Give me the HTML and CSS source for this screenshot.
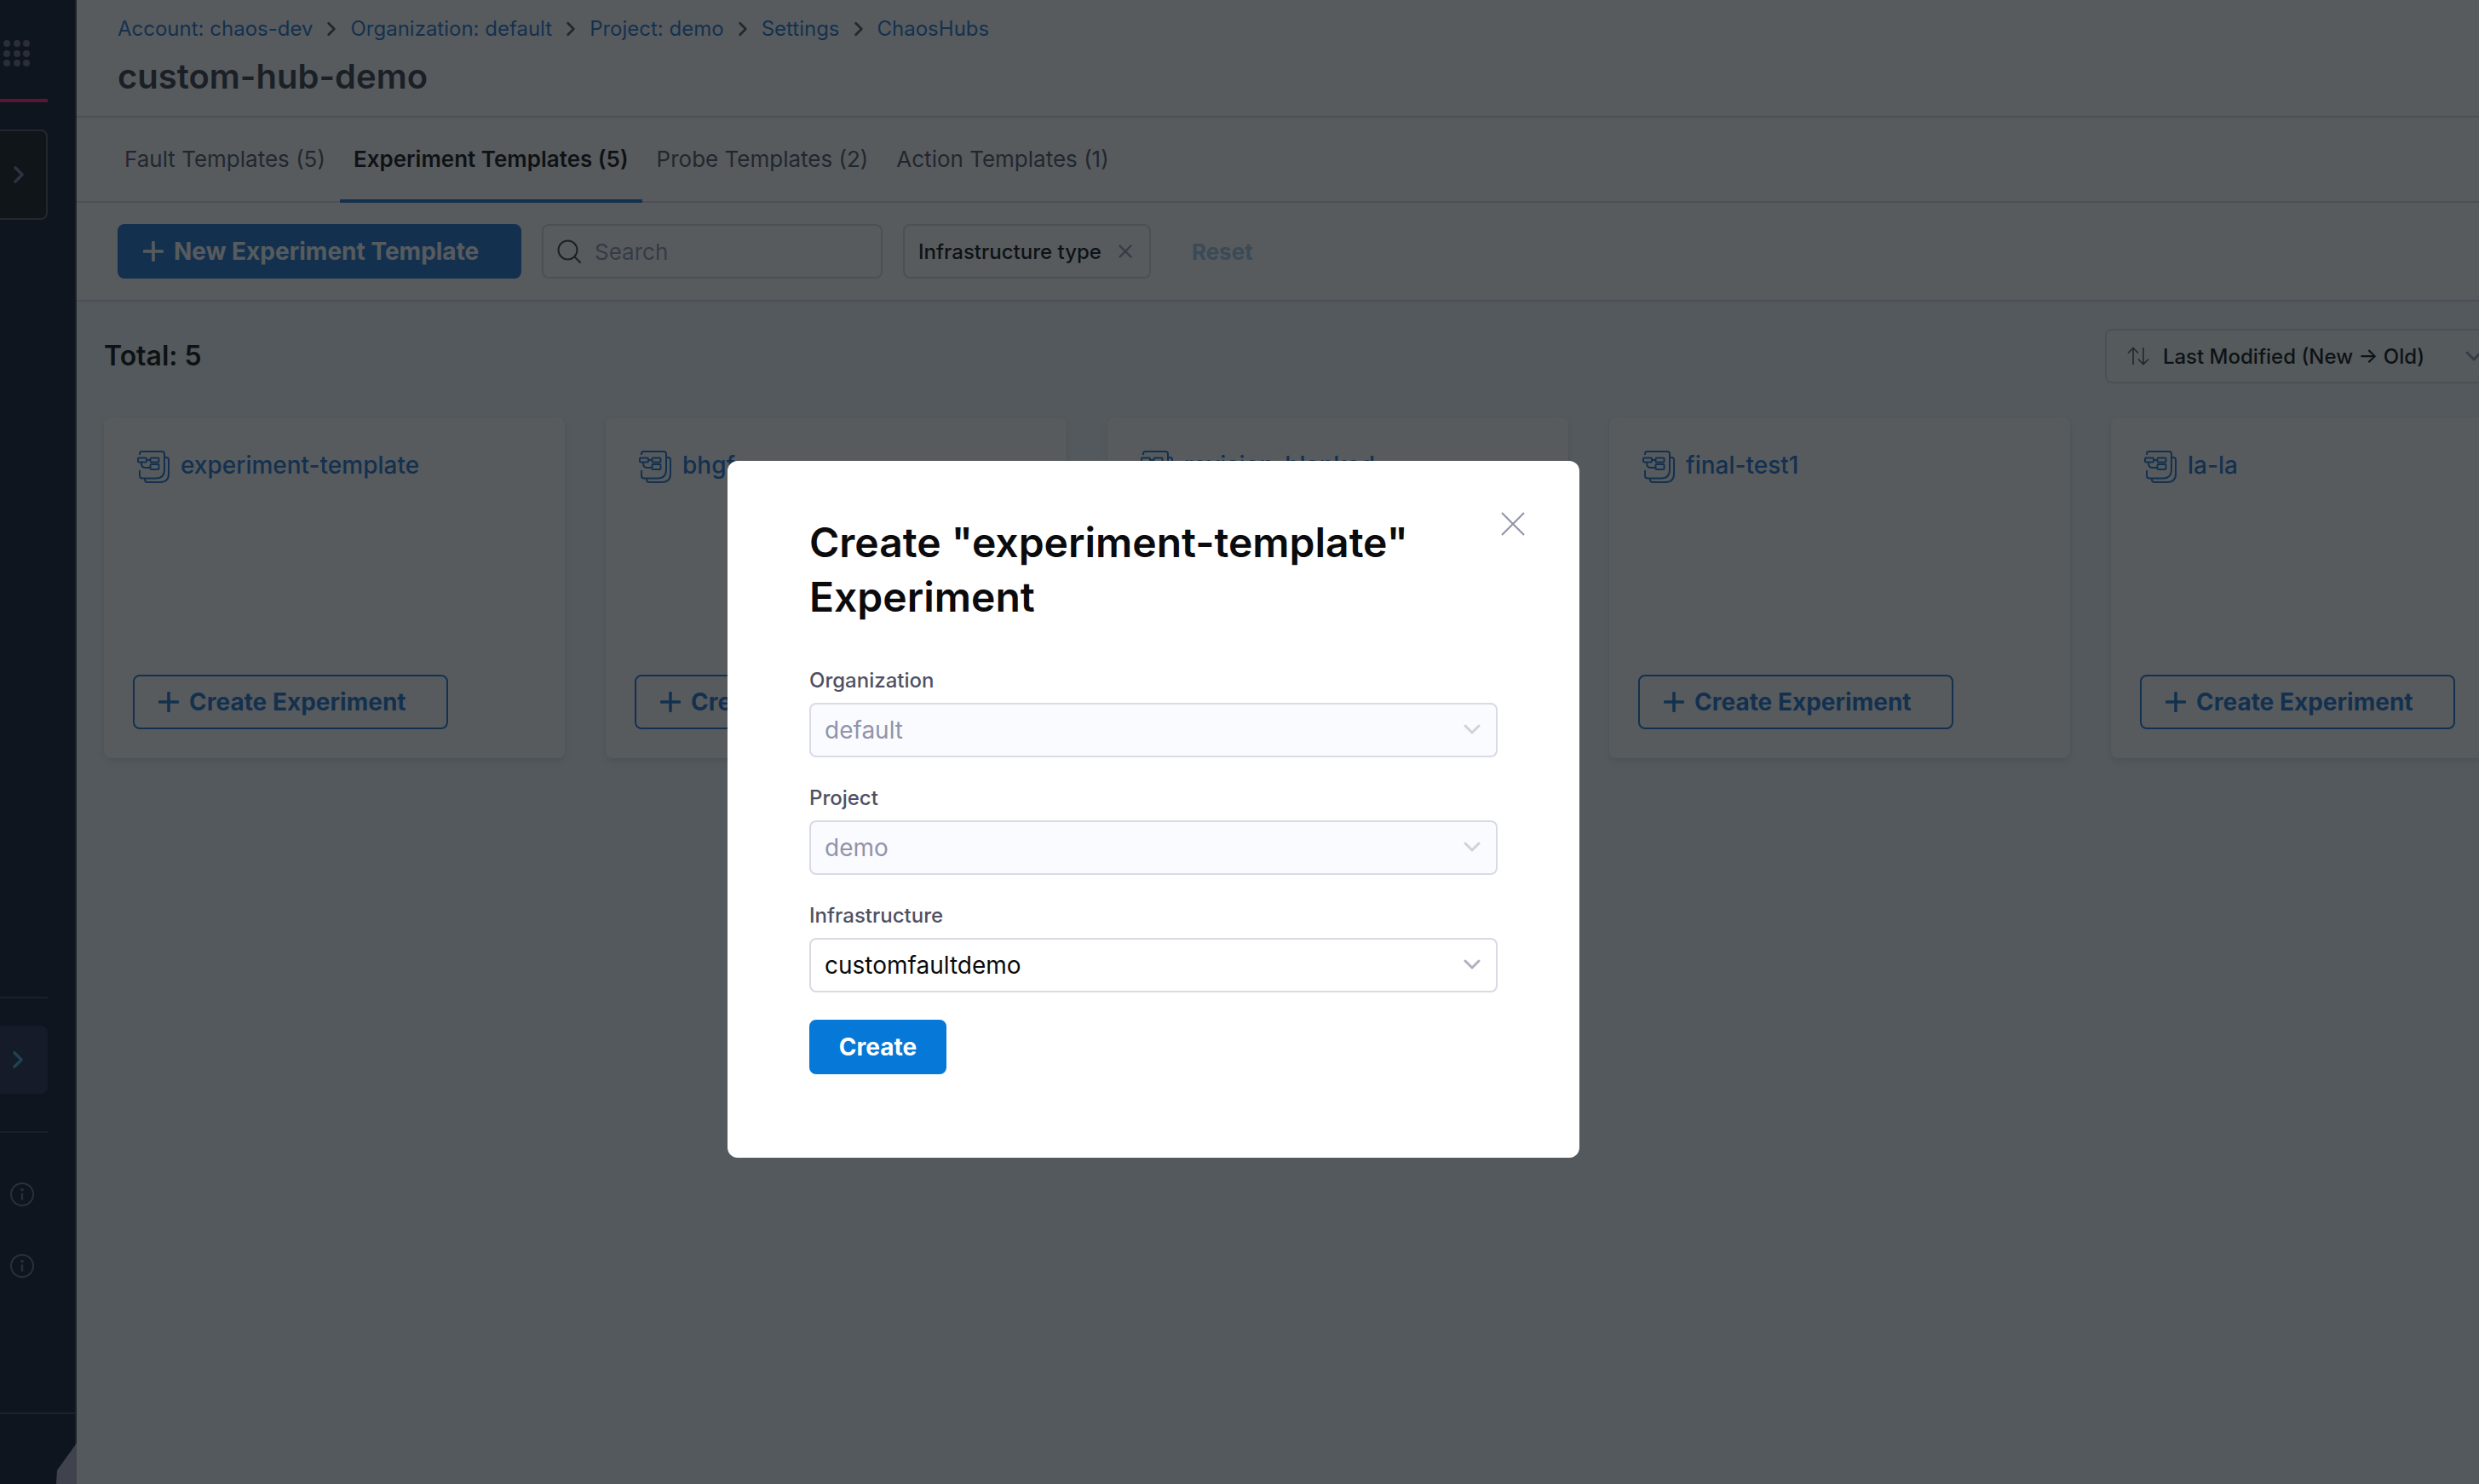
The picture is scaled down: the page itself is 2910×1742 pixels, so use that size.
FILE: index.html
```html
<!DOCTYPE html>
<html lang="en">
<head>
<meta charset="utf-8">
<title>custom-hub-demo</title>
<link rel="stylesheet" href="styles.css">
</head>
<body>
<svg class="sprite" aria-hidden="true">
  <symbol id="chevron-right" viewBox="0 0 10 16"><path d="M2 2l6 6-6 6" fill="none" stroke="currentColor" stroke-width="2.4" stroke-linecap="round" stroke-linejoin="round"/></symbol>
  <symbol id="chevron-down" viewBox="0 0 20 12"><path d="M2 2l8 8 8-8" fill="none" stroke="currentColor" stroke-width="3" stroke-linecap="round" stroke-linejoin="round"/></symbol>
  <symbol id="plus" viewBox="0 0 24 24"><path d="M12 1.5v21M1.5 12h21" fill="none" stroke="currentColor" stroke-width="3.6" stroke-linecap="round"/></symbol>
  <symbol id="info" viewBox="0 0 28 28"><circle cx="14" cy="14" r="13" fill="none" stroke="currentColor" stroke-width="2"/><circle cx="14" cy="8.6" r="1.8" fill="currentColor"/><path d="M14 13.6v6" stroke="currentColor" stroke-width="2.4" stroke-linecap="round"/></symbol>
  <symbol id="template" viewBox="0 0 40 40"><g fill="none" stroke="currentColor" stroke-width="2" stroke-linejoin="round"><path d="M4 6V4.500Q4 2 6.500 2H30Q33 2 33 5V23Q33 33.500 23 33.500H7Q4 33.500 4 30.500V24"/><path d="M33 9h2.500Q38 9 38 12V28Q38 38 28 38H13Q10 38 10 35V33.500"/><rect x="2" y="9.500" width="10" height="5" rx="1"/><rect x="16.500" y="9.500" width="10" height="5" rx="1"/><rect x="16.500" y="17" width="10" height="6" rx="1"/><path d="M12 12h4.500M6 14.500V16q0 5 5 5h5.500"/></g></symbol>
</svg>

<div class="app">
  <aside class="sidebar">
    <svg class="apps" viewBox="0 0 36 36" aria-hidden="true"><g fill="currentColor"><circle cx="8" cy="7" r="4"/><circle cx="20" cy="7" r="4"/><circle cx="31" cy="7" r="4"/><circle cx="8" cy="19" r="4"/><circle cx="20" cy="19" r="4"/><circle cx="31" cy="19" r="4"/><circle cx="8" cy="30" r="4"/><circle cx="20" cy="30" r="4"/><circle cx="31" cy="30" r="4"/></g></svg>
    <div class="accent"></div>
    <button class="scope" aria-label="Change scope"><svg class="scope-icon"><use href="#chevron-right"/></svg></button>
    <div class="sidebar-bottom">
      <hr class="rule">
      <button class="settings" aria-label="Open settings"><svg class="settings-icon"><use href="#chevron-right"/></svg></button>
      <hr class="rule">
      <svg class="info"><use href="#info"/></svg>
      <svg class="info"><use href="#info"/></svg>
      <div class="sidebar-foot"><svg class="collapse" viewBox="0 0 24 48" aria-hidden="true"><path d="M24 0L1 32L0 48H24Z" fill="currentColor"/></svg></div>
    </div>
  </aside>

  <main class="main">
    <header class="header">
      <nav class="crumbs" aria-label="Breadcrumb">
        <a href="#">Account: chaos-dev</a><svg class="crumb-sep"><use href="#chevron-right"/></svg>
        <a href="#">Organization: default</a><svg class="crumb-sep"><use href="#chevron-right"/></svg>
        <a href="#">Project: demo</a><svg class="crumb-sep"><use href="#chevron-right"/></svg>
        <a href="#">Settings</a><svg class="crumb-sep"><use href="#chevron-right"/></svg>
        <a href="#">ChaosHubs</a>
      </nav>
      <h1 class="title">custom-hub-demo</h1>
    </header>
    <nav class="tabs" aria-label="Templates">
      <a class="tab" href="#">Fault Templates (5)</a>
      <a class="tab tab-active" href="#">Experiment Templates (5)</a>
      <a class="tab" href="#">Probe Templates (2)</a>
      <a class="tab" href="#">Action Templates (1)</a>
    </nav>
    <div class="toolbar">
      <button class="btn btn-primary btn-new"><svg class="plus"><use href="#plus"/></svg>New Experiment Template</button>
      <label class="search">
        <svg class="search-icon" viewBox="0 0 28 28" aria-hidden="true"><circle cx="12.500" cy="12.500" r="11" fill="none" stroke="currentColor" stroke-width="2"/><path d="M20.500 20.500L27 27" stroke="currentColor" stroke-width="2" stroke-linecap="round"/></svg>
        <input class="search-input" type="text" placeholder="Search" aria-label="Search">
      </label>
      <button class="filter">Infrastructure type<svg class="filter-x" viewBox="0 0 16 16" aria-hidden="true"><path d="M1.500 1.500l13 13M14.500 1.500l-13 13" stroke="currentColor" stroke-width="2.400" stroke-linecap="round"/></svg></button>
      <button class="reset">Reset</button>
    </div>
    <section class="content">
      <div class="summary">
        <h2 class="total">Total: 5</h2>
        <button class="sort">
          <svg class="sort-icon" viewBox="0 0 26 22" aria-hidden="true"><path d="M7 21V1.500M1 7.500l6-6 6 6M19 1v19.500M13 14.500l6 6 6-6" fill="none" stroke="currentColor" stroke-width="1.600"/></svg>
          <span class="sort-label">Last Modified (New → Old)</span>
          <svg class="sort-chevron"><use href="#chevron-down"/></svg>
        </button>
      </div>
      <div class="cards">
        <article class="card"><a class="card-title" href="#"><svg class="template"><use href="#template"/></svg>experiment-template</a><button class="btn btn-outline"><svg class="plus"><use href="#plus"/></svg>Create Experiment</button></article>
        <article class="card"><a class="card-title" href="#"><svg class="template"><use href="#template"/></svg>bhgf</a><button class="btn btn-outline"><svg class="plus"><use href="#plus"/></svg>Create Experiment</button></article>
        <article class="card"><a class="card-title" href="#"><svg class="template"><use href="#template"/></svg>revision-blanked</a><button class="btn btn-outline"><svg class="plus"><use href="#plus"/></svg>Create Experiment</button></article>
        <article class="card"><a class="card-title" href="#"><svg class="template"><use href="#template"/></svg>final-test1</a><button class="btn btn-outline"><svg class="plus"><use href="#plus"/></svg>Create Experiment</button></article>
        <article class="card"><a class="card-title" href="#"><svg class="template"><use href="#template"/></svg>la-la</a><button class="btn btn-outline"><svg class="plus"><use href="#plus"/></svg>Create Experiment</button></article>
      </div>
    </section>
  </main>
</div>

<div class="backdrop">
  <div class="dialog" role="dialog" aria-modal="true" aria-labelledby="dialog-title">
    <button class="close" aria-label="Close"><svg class="close-icon" viewBox="0 0 28 28"><path d="M1 1l26 26M27 1L1 27" stroke="currentColor" stroke-width="2"/></svg></button>
    <h2 class="dialog-title" id="dialog-title">Create "experiment-template" Experiment</h2>
    <form class="form">
      <div class="field">
        <label class="label" for="org">Organization</label>
        <div class="select-wrap select-disabled"><select class="select" id="org" disabled><option>default</option></select><svg class="select-chevron"><use href="#chevron-down"/></svg></div>
      </div>
      <div class="field">
        <label class="label" for="project">Project</label>
        <div class="select-wrap select-disabled"><select class="select" id="project" disabled><option>demo</option></select><svg class="select-chevron"><use href="#chevron-down"/></svg></div>
      </div>
      <div class="field">
        <label class="label" for="infra">Infrastructure</label>
        <div class="select-wrap"><select class="select" id="infra"><option>customfaultdemo</option></select><svg class="select-chevron"><use href="#chevron-down"/></svg></div>
      </div>
      <button class="btn btn-primary btn-create" type="button">Create</button>
    </form>
  </div>
</div>
</body>
</html>
```

FILE: styles.css
```css
:root {
  --primary: #1d73cb;
  --primary-strong: #0578d8;
  --border: #d9dae5;
  --text: #0b0b0d;
  --text-muted: #4f5162;
  --grey: #9293ab;
}

* { box-sizing: border-box; }

body {
  margin: 0;
  font-family: Inter, "Liberation Sans", sans-serif;
  font-size: 24px;
  color: var(--text);
  background: #fff;
}

button, input, select { font: inherit; color: inherit; }
button { cursor: pointer; }
a { color: var(--primary); text-decoration: none; }
h1, h2 { margin: 0; font-weight: 600; }
.sprite { position: absolute; width: 0; height: 0; }

.app { display: flex; height: 100vh; overflow: hidden; }

/* Sidebar */
.sidebar {
  flex: none;
  display: flex;
  flex-direction: column;
  align-items: flex-start;
  width: 90px;
  background: #0a162e;
  border-right: 2px solid #3a4550;
  color: #6b6d85;
}
.apps { width: 36px; height: 36px; margin-top: 44px; color: #6b6680; }
.accent { width: 56px; height: 4px; margin: 36px 0 32px; background: #fa2468; }
.scope {
  display: flex;
  align-items: center;
  width: 56px;
  height: 106px;
  padding: 0 0 0 15px;
  border: 2px solid #55535e;
  border-left: 0;
  border-radius: 0 8px 8px 0;
  background: #12161d;
  color: #7b7798;
}
.scope-icon { width: 14px; height: 22px; }
.sidebar-bottom { display: flex; flex-direction: column; align-items: flex-start; width: 100%; margin-top: auto; }
.rule { width: 56px; height: 2px; margin: 0; border: 0; background: #3a3f4b; }
.settings {
  display: flex;
  align-items: center;
  width: 56px;
  height: 80px;
  margin: 32px 0 44px;
  padding: 0 0 0 14px;
  border: 0;
  border-radius: 0 8px 8px 0;
  background: #222a4a;
  color: #45b0da;
}
.settings-icon { width: 14px; height: 22px; }
.info { width: 28px; height: 28px; margin: 56px 0 0 12px; color: #6b6d80; }
.rule + .info { margin-top: 58px; }
.sidebar-foot {
  display: flex;
  justify-content: flex-end;
  align-items: flex-end;
  width: 100%;
  height: 84px;
  margin-top: 158px;
  border-top: 2px solid #3a4550;
}
.collapse { width: 24px; height: 48px; margin-right: -2px; color: #b3b0c7; }

/* Page header */
.main {
  flex: 1;
  min-width: 0;
  display: flex;
  flex-direction: column;
  background: #fff;
}
.header {
  display: flex;
  flex-direction: column;
  gap: 16px;
  padding: 18px 48px 22px;
  border-bottom: 2px solid var(--border);
}
.crumbs { display: flex; align-items: center; gap: 16px; line-height: 32px; }
.crumb-sep { width: 12px; height: 18px; color: var(--text-muted); }
.title { font-size: 40px; line-height: 48px; color: #383946; }

.tabs { display: flex; gap: 1px; height: 100px; padding: 0 40px; border-bottom: 2px solid var(--border); }
.tab {
  display: flex;
  align-items: center;
  height: 100px;
  padding: 0 16px;
  border-bottom: 4px solid transparent;
  font-size: 26px;
  color: var(--text-muted);
}
.tab-active {
  border-color: var(--primary);
  border-radius: 4px 4px 0 0;
  font-weight: 600;
  color: var(--text);
}

/* Toolbar */
.toolbar {
  display: flex;
  align-items: center;
  gap: 24px;
  padding: 25px 48px;
  border-bottom: 2px solid var(--border);
}
.btn {
  display: flex;
  align-items: center;
  gap: 12px;
  height: 64px;
  padding: 0 28px;
  border: 2px solid var(--primary);
  border-radius: 8px;
  font-size: 28px;
  font-weight: 700;
  white-space: nowrap;
}
.btn-primary { background: var(--primary); color: #fff; }
.btn-new { min-width: 474px; }
.btn-outline { min-width: 370px; background: transparent; color: var(--primary); }
.plus { width: 24px; height: 24px; }
.search {
  display: flex;
  align-items: center;
  gap: 16px;
  width: 400px;
  height: 64px;
  padding: 0 16px;
  border: 2px solid var(--border);
  border-radius: 8px;
}
.search-icon { flex: none; width: 28px; height: 28px; color: #383946; }
.search-input { flex: 1; min-width: 0; padding: 0; border: 0; outline: 0; background: none; font-size: 26px; }
.search-input::placeholder { color: var(--grey); opacity: 1; }
.filter {
  display: flex;
  align-items: center;
  gap: 20px;
  height: 64px;
  padding: 0 20px 0 16px;
  border: 2px solid var(--border);
  border-radius: 8px;
  background: none;
  font-weight: 500;
}
.filter-x { width: 16px; height: 16px; color: var(--grey); }
.reset { padding: 0 24px; border: 0; background: none; font-size: 26px; font-weight: 700; color: #a3c4e8; }

/* Content */
.content { flex: 1; padding: 32px 0 32px 32px; background: #f4f8fb; overflow: hidden; }
.summary { display: flex; align-items: center; justify-content: space-between; margin-right: -26px; }
.total { font-size: 32px; line-height: 40px; }
.sort {
  display: flex;
  align-items: center;
  height: 64px;
  padding: 0 20px 0 24px;
  border: 2px solid var(--border);
  border-radius: 8px;
  background: #f8fafb;
  font-weight: 500;
}
.sort-icon { width: 26px; height: 22px; margin-right: 16px; color: var(--text-muted); }
.sort-label { margin-right: 48px; }
.sort-chevron { width: 20px; height: 12px; color: var(--grey); }
.cards { display: grid; grid-template-columns: repeat(5, 541px); gap: 48px; margin-top: 40px; }
.card {
  display: flex;
  flex-direction: column;
  align-items: flex-start;
  justify-content: space-between;
  height: 400px;
  padding: 38px 34px 34px;
  border-radius: 8px;
  background: #fff;
  box-shadow: 0 4px 8px rgba(96, 97, 112, .16), 0 0 2px rgba(40, 41, 61, .08);
}
.card-title { display: flex; gap: 12px; padding-left: 4px; font-size: 28px; font-weight: 500; line-height: 36px; }
.template { width: 40px; height: 40px; }

/* Dialog */
.backdrop {
  position: fixed;
  inset: 0;
  display: flex;
  align-items: center;
  justify-content: center;
  padding: 158px 202px 0 0;
  background: rgba(16, 22, 26, .7);
}
.dialog {
  position: relative;
  width: 1000px;
  padding: 64px 96px 98px;
  border-radius: 12px;
  background: #fff;
}
.dialog-title { font-size: 48px; line-height: 64px; }
.close { position: absolute; top: 60px; right: 64px; display: flex; padding: 0; border: 0; background: none; color: var(--grey); }
.close-icon { width: 28px; height: 28px; }
.form { display: flex; flex-direction: column; align-items: flex-start; gap: 32px; margin-top: 50px; }
.field { width: 100%; }
.label { display: block; margin-bottom: 10px; font-weight: 500; line-height: 32px; color: var(--text-muted); }
.select-wrap { position: relative; color: var(--text); }
.select {
  display: block;
  width: 100%;
  height: 64px;
  padding: 0 48px 0 16px;
  border: 2px solid var(--border);
  border-radius: 8px;
  appearance: none;
  background: #fff;
  font-size: 28px;
  opacity: 1;
}
.select-disabled { color: var(--grey); }
.select-disabled .select { background: #fafbfe; }
.select-chevron { position: absolute; top: 25px; right: 20px; width: 20px; height: 12px; color: #b0b1c4; pointer-events: none; }
.select-disabled .select-chevron { color: #ccd3da; }
.btn-create { justify-content: center; min-width: 161px; border-color: var(--primary-strong); background: var(--primary-strong); }
```
